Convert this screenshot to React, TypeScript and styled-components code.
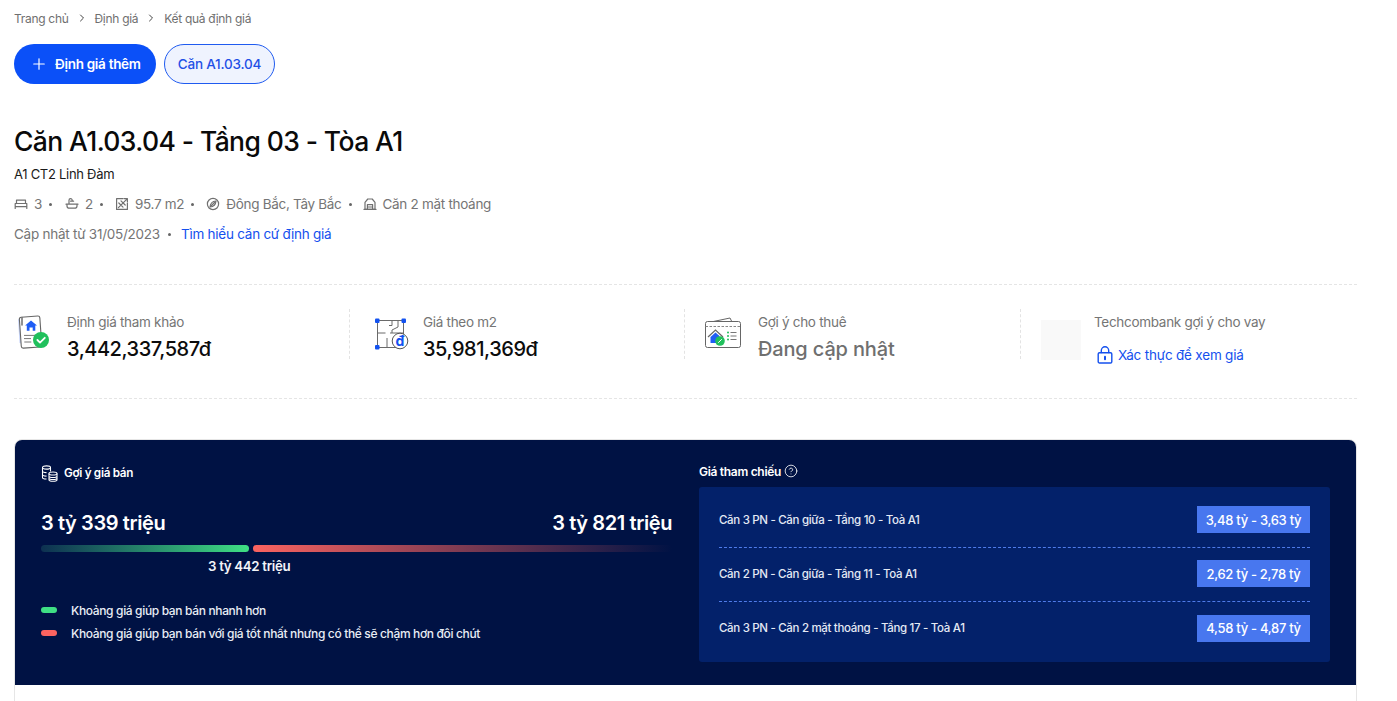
import styled, { createGlobalStyle } from "styled-components"
import { ChevronRight, CircleHelp, Plus } from "lucide-react"

const GlobalStyle = createGlobalStyle`
  html, body {
    margin: 0;
    background: #fff;
    overflow: hidden;
    font-family: Inter, "Noto Sans", "Liberation Sans", sans-serif;
  }
  * { box-sizing: border-box; }
`

const Page = styled.div`
  height: 701px;
  padding: 0 40px 0 14px;
  overflow: hidden;
`

const Breadcrumb = styled.nav`
  display: flex;
  align-items: center;
  height: 36px;
  font-size: 12px;
  letter-spacing: -0.3px;
  color: #6f6f6f;
  svg { margin: 0 7px 0 7px; color: #444; }
`

const Actions = styled.div`
  display: flex;
  gap: 8px;
  margin-top: 8px;
`

const PrimaryButton = styled.button`
  display: flex;
  align-items: center;
  gap: 7px;
  width: 142px;
  height: 40px;
  padding: 0 0 0 16px;
  border: 0;
  border-radius: 20px;
  background: #0b50f8;
  color: #fff;
  font: 600 13.5px Inter, sans-serif;
  letter-spacing: -0.3px;
`

const TabButton = styled.button`
  width: 111px;
  height: 40px;
  border: 1px solid #1f5bf0;
  border-radius: 20px;
  background: #eff3fe;
  color: #1f50e6;
  font: 500 13.5px Inter, sans-serif;
  letter-spacing: -0.2px;
`

const Title = styled.h1`
  margin: 39px 0 0;
  font-size: 26.5px;
  line-height: 36px;
  font-weight: 500;
  letter-spacing: -0.6px;
  color: #0a0a0a;
`

const Subtitle = styled.div`
  margin-top: 6px;
  font-size: 13px;
  line-height: 18px;
  letter-spacing: -0.28px;
  color: #1a1a1a;
`

const FactRow = styled.div`
  display: flex;
  align-items: center;
  height: 20px;
  margin-top: 11px;
  font-size: 13.5px;
  letter-spacing: -0.3px;
  color: #757575;
`

const Fact = styled.span<{ $gap: number }>`
  display: flex;
  align-items: center;
  gap: 6px;
  margin-right: ${(p) => p.$gap}px;
  svg { flex: none; }
`

const Dot = styled.i<{ $left?: number; $right?: number }>`
  width: 3px;
  height: 3px;
  border-radius: 50%;
  background: #666;
  margin-left: ${(p) => p.$left ?? 8}px;
  margin-right: ${(p) => p.$right ?? 0}px;
`

const UpdateRow = styled.div`
  display: flex;
  align-items: center;
  margin-top: 10px;
  height: 20px;
  font-size: 13.5px;
  letter-spacing: -0.25px;
  color: #757575;
`

const InfoLink = styled.span`
  color: #1450ee;
`

const Stats = styled.section`
  display: grid;
  grid-template-columns: 335px 335px 336px 1fr;
  height: 115px;
  margin-top: 40px;
  padding-top: 24px;
  border-top: 1px dashed #e5e5e5;
  border-bottom: 1px dashed #e5e5e5;
`

const Stat = styled.div`
  display: flex;
  height: 50px;
  padding-left: 20px;
  border-left: 1px dashed #e3e3e3;
  &:first-child { padding-left: 0; border-left: 0; }
`

const StatIcon = styled.div<{ $x: number; $y: number }>`
  width: 53px;
  flex: none;
  padding: ${(p) => p.$y}px 0 0 ${(p) => p.$x}px;
`

const Placeholder = styled.div`
  width: 40px;
  height: 40px;
  background: #f9f9f9;
`

const StatText = styled.div`
  padding-top: 3px;
`

const StatLabel = styled.div`
  font-size: 13.5px;
  line-height: 20px;
  letter-spacing: -0.3px;
  color: #757575;
`

const StatValue = styled.div<{ $muted?: boolean }>`
  margin-top: 4px;
  font-size: 20px;
  line-height: 26px;
  font-weight: 500;
  letter-spacing: ${(p) => (p.$muted ? "-0.15px" : "-0.45px")};
  color: ${(p) => (p.$muted ? "#6f6f6f" : "#0c0c0c")};
`

const VerifyLink = styled.div`
  display: flex;
  align-items: center;
  gap: 5px;
  margin-top: 13px;
  margin-left: 3px;
  font-size: 13.5px;
  line-height: 20px;
  letter-spacing: -0.2px;
  color: #1450ee;
`

const Card = styled.section`
  margin-top: 40px;
  height: 300px;
  border: 1px solid #e6e6e6;
  border-radius: 8px 8px 0 0;
  overflow: hidden;
`

const DarkBand = styled.div`
  display: grid;
  grid-template-columns: 631px 631px;
  column-gap: 27px;
  height: 245px;
  padding: 0 26px 0 26px;
  background: #001244;
  color: #fff;
`

const Column = styled.div`
  min-width: 0;
`

const SectionHead = styled.div`
  display: flex;
  align-items: center;
  gap: 6px;
  height: 18px;
  margin-top: 24px;
  font-size: 11.7px;
  font-weight: 600;
  letter-spacing: -0.3px;
`

const RefHead = styled(SectionHead)`
  gap: 3px;
  margin-top: 22px;
  font-size: 12px;
`

const Ends = styled.div`
  display: flex;
  justify-content: space-between;
  margin-top: 28px;
  font-size: 20px;
  line-height: 26px;
  font-weight: 600;
  letter-spacing: -0.4px;
`

const Bar = styled.div`
  display: flex;
  gap: 4px;
  height: 7px;
  margin-top: 9px;
`

const BarPart = styled.div<{ $kind: "fast" | "best" }>`
  border-radius: 4px;
  ${(p) =>
    p.$kind === "fast"
      ? "width: 208px; background: linear-gradient(90deg, #0d3051, #3fdf84);"
      : "flex: 1; background: linear-gradient(90deg, #fb6360, #001244);"}
`

const Midpoint = styled.div`
  width: 100%;
  padding-left: 167px;
  margin-top: 5px;
  font-size: 13.3px;
  line-height: 18px;
  font-weight: 600;
  letter-spacing: -0.33px;
  color: #f2f4f8;
`

const Legend = styled.ul`
  display: flex;
  flex-direction: column;
  gap: 5px;
  margin: 26px 0 0;
  padding: 0;
  list-style: none;
`

const LegendItem = styled.li`
  display: flex;
  align-items: center;
  gap: 14px;
  height: 18px;
  font-size: 12px;
  font-weight: 500;
  letter-spacing: -0.35px;
  color: #e9edf5;
`

const Swatch = styled.i<{ $color: string }>`
  width: 16px;
  height: 6px;
  border-radius: 3px;
  background: ${(p) => p.$color};
`

const RefPanel = styled.div`
  margin-top: 7px;
  padding: 7px 20px 0;
  height: 175px;
  border-radius: 3px;
  background: #03216a;
`

const RefRow = styled.div`
  display: flex;
  align-items: center;
  justify-content: space-between;
  height: 54px;
  padding-bottom: 2px;
  font-size: 11.5px;
  font-weight: 500;
  letter-spacing: -0.32px;
  color: #e4e9f4;
  border-bottom: 1px dashed #4f7be8;
  &:last-child { border-bottom: 0; }
`

const PriceTag = styled.span`
  display: flex;
  align-items: center;
  justify-content: center;
  width: 113px;
  height: 27px;
  background: #4877ef;
  color: #fff;
  font-size: 13px;
  letter-spacing: -0.3px;
`

const iconProps = {
  fill: "none",
  stroke: "#707070",
  strokeWidth: 1.2,
  strokeLinecap: "round" as const,
  strokeLinejoin: "round" as const,
}

const BedIcon = () => (
  <svg width="14" height="14" viewBox="0 0 14 14" {...iconProps}>
    <path d="M2.500 6.500V3.200h9v3.300M1.200 11.500V6.500h11.600v5M1.200 9.600h11.600" />
  </svg>
)

const BathIcon = () => (
  <svg width="14" height="14" viewBox="0 0 14 14" {...iconProps}>
    <path d="M4 7V3.200a1.600 1.600 0 0 1 3.200 0M5.600 4.200h3M1 7.200h12M2 7.200v1.700c0 1.400 1 2.200 2.200 2.200h5.600c1.200 0 2.200-.8 2.200-2.200V7.200" />
  </svg>
)

const AreaIcon = () => (
  <svg width="14" height="14" viewBox="0 0 14 14" {...iconProps}>
    <path d="M8 1.600H1.600v10.800h10.800V6" />
    <path d="M3.400 10.600l9-9M9 1.600h3.400V5M3.800 6l4.200 4.200M6 3.800l4.200 4.200" />
  </svg>
)

const CompassIcon = () => (
  <svg width="14" height="14" viewBox="0 0 14 14" {...iconProps}>
    <circle cx="7" cy="7" r="5.600" />
    <path d="M10 4C6.600 4.300 4.300 6.600 4 10c3.400-.3 5.700-2.600 6-6z" />
    <path d="M5.500 8.500l3-3" />
  </svg>
)

const HouseIcon = () => (
  <svg width="14" height="14" viewBox="0 0 14 14" {...iconProps}>
    <path d="M2 12.400V5.400L4.800 2h4.400L12 5.400v7z" />
    <path d="M1 12.400h12M4.400 12.200V7.600h5.200v4.600M4.400 10h5.200" />
  </svg>
)

const LockIcon = () => (
  <svg width="16" height="18" viewBox="0 0 16 18" fill="none" stroke="#1450ee" strokeWidth="1.400" strokeLinecap="round">
    <rect x="1.200" y="6.700" width="13.600" height="10.300" rx="1.300" />
    <path d="M4.300 6.500V4.500a3.700 3.700 0 0 1 7.400 0v2" />
    <path d="M8 10.800v2.400" strokeWidth="2" />
  </svg>
)

const ValuationIcon = () => (
  <svg width="34" height="38" viewBox="0 0 34 38" fill="none">
    <path d="M2 5.500L3.500 29l3 1L8 3z" fill="#c9d6fa" />
    <rect x="4.300" y="2.600" width="20.500" height="31" rx="2" transform="rotate(-4 14 18)" fill="#fff" stroke="#666" strokeWidth="1.100" />
    <path d="M6 3.500v7.500" stroke="#777" strokeWidth="1.600" strokeLinecap="round" />
    <path d="M15 6.400l6 5h-1.700v5.400h-2.600v-3.400h-3.200v3.400h-2.700v-5.400h-1.700z" fill="#1f5df5" />
    <path d="M8 21.400h11M8 24.600h7M8.300 28h7" stroke="#777" strokeWidth="1" />
    <circle cx="25" cy="26" r="8" fill="#20c05c" />
    <path d="M21.400 26l2.600 2.600 4.800-4.800" stroke="#fff" strokeWidth="1.800" strokeLinecap="round" strokeLinejoin="round" />
  </svg>
)

const PlanIcon = () => (
  <svg width="34" height="36" viewBox="0 0 34 36" fill="none">
    <path d="M2.500 3.500h26v27h-26z" stroke="#6a6a6a" strokeWidth="1" />
    <path d="M2.500 16h8M15 16h13.500M12 30V21M17 3.500v5h-3M23 4v6l-6 3v3" stroke="#6a6a6a" strokeWidth="1" />
    <rect x="0" y="1.500" width="4.500" height="4.500" rx="1" fill="#1352f0" />
    <rect x="26.500" y="1.500" width="4.500" height="4.500" rx="1" fill="#1352f0" />
    <rect x="0" y="28" width="4.500" height="4.500" rx="1" fill="#1352f0" />
    <circle cx="25" cy="24" r="7.800" fill="#fff" stroke="#555" strokeWidth="1" />
    <text x="25" y="29" textAnchor="middle" fontSize="14" fontWeight="700" fontFamily="Inter, sans-serif" fill="#1352f0">đ</text>
  </svg>
)

const RentIcon = () => (
  <svg width="38" height="34" viewBox="2 0 38 34" fill="none">
    <path d="M8 6l19-4 2 4" stroke="#666" strokeWidth="1" fill="#fff" />
    <rect x="2.500" y="5.500" width="35" height="26" rx="2" fill="#fff" stroke="#666" strokeWidth="1" />
    <path d="M2.500 10.500h35" stroke="#888" strokeWidth="1" strokeDasharray="2.500 1.500" />
    <path d="M5 21l7.500-7 7.500 7" stroke="#666" strokeWidth="1.200" />
    <path d="M7.500 27v-6l5-4.600 4 3.600V27z" fill="#1f5df5" />
    <circle cx="17" cy="25" r="4.800" fill="#20c05c" />
    <path d="M15.200 26.800l3.600-3.600" stroke="#fff" strokeWidth="1" />
    <path d="M25 16.500h.01M25 20h.01M25 23.500h.01" stroke="#20c05c" strokeWidth="2" strokeLinecap="round" />
    <path d="M27.500 16.500h6M27.500 20h6M27.500 23.500h6" stroke="#777" strokeWidth="1" />
  </svg>
)

const CoinsIcon = () => (
  <svg width="17" height="17" viewBox="0 0 17 17" fill="none" stroke="#fff" strokeWidth="1.100">
    <ellipse cx="5.500" cy="2.500" rx="4" ry="1.600" />
    <path d="M1.500 2.500v10c0 1 1.500 1.500 4 1.500M9.500 2.500v4M1.500 6c0 1 2 1.600 4 1.600M1.500 9.500c0 1 2 1.600 4 1.600" />
    <ellipse cx="12" cy="8.500" rx="4" ry="1.500" />
    <path d="M8 8.500v6.300c0 .9 1.800 1.500 4 1.500s4-.6 4-1.500V8.500M8 11c0 .9 1.800 1.500 4 1.500s4-.6 4-1.500M8 13c0 .9 1.800 1.500 4 1.500s4-.6 4-1.500" />
  </svg>
)

const refs = [
  { name: "Căn 3 PN - Căn giữa - Tầng 10 - Toà A1", price: "3,48 tỷ - 3,63 tỷ" },
  { name: "Căn 2 PN - Căn giữa - Tầng 11 - Toà A1", price: "2,62 tỷ - 2,78 tỷ" },
  { name: "Căn 3 PN - Căn 2 mặt thoáng - Tầng 17 - Toà A1", price: "4,58 tỷ - 4,87 tỷ" },
]

export default function App() {
  return (
    <Page>
      <GlobalStyle />
      <Breadcrumb>
        Trang chủ
        <ChevronRight size={12} strokeWidth={2} />
        Định giá
        <ChevronRight size={12} strokeWidth={2} />
        Kết quả định giá
      </Breadcrumb>

      <Actions>
        <PrimaryButton>
          <Plus size={18} strokeWidth={1.6} />
          Định giá thêm
        </PrimaryButton>
        <TabButton>Căn A1.03.04</TabButton>
      </Actions>

      <Title>Căn A1.03.04 - Tầng 03 - Tòa A1</Title>
      <Subtitle>A1 CT2 Linh Đàm</Subtitle>

      <FactRow>
        <Fact $gap={13}><BedIcon />3<Dot $left={1} /></Fact>
        <Fact $gap={12}><BathIcon />2<Dot $left={1} /></Fact>
        <Fact $gap={12}><AreaIcon />95.7 m2<Dot $left={1} /></Fact>
        <Fact $gap={11}><CompassIcon />Đông Bắc, Tây Bắc<Dot $left={1} /></Fact>
        <Fact $gap={0}><HouseIcon />Căn 2 mặt thoáng</Fact>
      </FactRow>

      <UpdateRow>
        Cập nhật từ 31/05/2023
        <Dot $left={8} $right={10} />
        <InfoLink>Tìm hiểu căn cứ định giá</InfoLink>
      </UpdateRow>

      <Stats>
        <Stat>
          <StatIcon $x={2} $y={5}><ValuationIcon /></StatIcon>
          <StatText>
            <StatLabel>Định giá tham khảo</StatLabel>
            <StatValue>3,442,337,587đ</StatValue>
          </StatText>
        </Stat>
        <Stat>
          <StatIcon $x={5} $y={8}><PlanIcon /></StatIcon>
          <StatText>
            <StatLabel>Giá theo m2</StatLabel>
            <StatValue>35,981,369đ</StatValue>
          </StatText>
        </Stat>
        <Stat>
          <StatIcon $x={0} $y={7}><RentIcon /></StatIcon>
          <StatText>
            <StatLabel>Gợi ý cho thuê</StatLabel>
            <StatValue $muted>Đang cập nhật</StatValue>
          </StatText>
        </Stat>
        <Stat>
          <StatIcon $x={0} $y={11}><Placeholder /></StatIcon>
          <StatText>
            <StatLabel>Techcombank gợi ý cho vay</StatLabel>
            <VerifyLink><LockIcon />Xác thực để xem giá</VerifyLink>
          </StatText>
        </Stat>
      </Stats>

      <Card>
        <DarkBand>
          <Column>
            <SectionHead><CoinsIcon />Gợi ý giá bán</SectionHead>
            <Ends>
              <span>3 tỷ 339 triệu</span>
              <span>3 tỷ 821 triệu</span>
            </Ends>
            <Bar>
              <BarPart $kind="fast" />
              <BarPart $kind="best" />
            </Bar>
            <Midpoint>3 tỷ 442 triệu</Midpoint>
            <Legend>
              <LegendItem><Swatch $color="#3fdf84" />Khoảng giá giúp bạn bán nhanh hơn</LegendItem>
              <LegendItem><Swatch $color="#fb6360" />Khoảng giá giúp bạn bán với giá tốt nhất nhưng có thể sẽ chậm hơn đôi chút</LegendItem>
            </Legend>
          </Column>
          <Column>
            <RefHead>Giá tham chiếu <CircleHelp size={14} strokeWidth={1.4} /></RefHead>
            <RefPanel>
              {refs.map((r) => (
                <RefRow key={r.name}>
                  {r.name}
                  <PriceTag>{r.price}</PriceTag>
                </RefRow>
              ))}
            </RefPanel>
          </Column>
        </DarkBand>
      </Card>
    </Page>
  )
}
